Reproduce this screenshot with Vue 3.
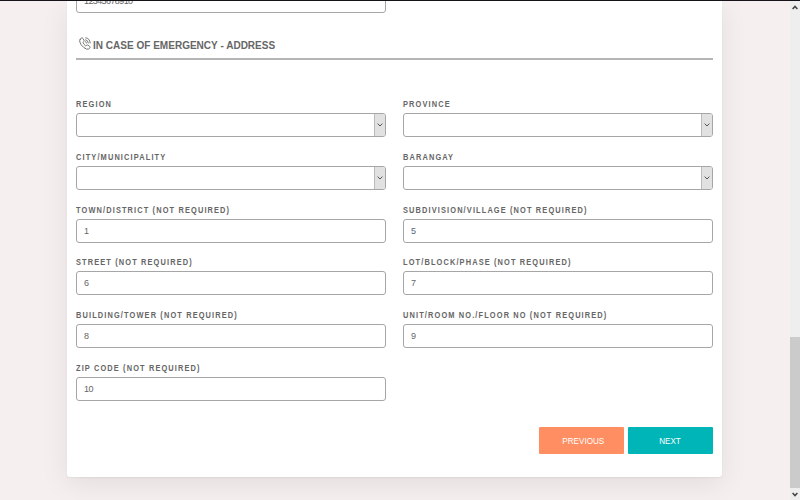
<script setup>
import { ref } from 'vue'

const fields = ref([
  { label: 'REGION', type: 'select', value: '' },
  { label: 'PROVINCE', type: 'select', value: '' },
  { label: 'CITY/MUNICIPALITY', type: 'select', value: '' },
  { label: 'BARANGAY', type: 'select', value: '' },
  { label: 'TOWN/DISTRICT (NOT REQUIRED)', type: 'text', value: '1' },
  { label: 'SUBDIVISION/VILLAGE (NOT REQUIRED)', type: 'text', value: '5', tint: true },
  { label: 'STREET (NOT REQUIRED)', type: 'text', value: '6' },
  { label: 'LOT/BLOCK/PHASE (NOT REQUIRED)', type: 'text', value: '7' },
  { label: 'BUILDING/TOWER (NOT REQUIRED)', type: 'text', value: '8' },
  { label: 'UNIT/ROOM NO./FLOOR NO (NOT REQUIRED)', type: 'text', value: '9' },
  { label: 'ZIP CODE (NOT REQUIRED)', type: 'text', value: '10' },
])
const phone = ref('12345678910')
</script>

<template>
  <div class="window">
    <main class="page">
      <form class="card" @submit.prevent>
        <input v-model="phone" class="control phone" />
        <h2 class="heading">
          <svg class="icon" viewBox="0 0 24 26" fill="none" stroke="currentColor" stroke-width="1.8" stroke-linejoin="round" stroke-linecap="round">
            <path d="M2.5 4.5 5 2Q6.5 1 7.8 2.8L10 6.5Q10.7 8 9.5 9.2L8 11Q9.5 15 13.5 18L15.3 16.5Q16.7 15.4 18.2 16.5L21.6 19Q23 20.5 21.8 21.8L19.5 24Q16 26 9.5 21 3.5 16 1.6 10 .8 6.5 2.5 4.5Z" />
            <path d="M13.5 1.5Q21.5 2.5 22.5 12M13.3 5.5Q18 6.3 18.7 12M13 9.3Q14.8 9.8 15 12" />
          </svg>
          <span class="heading-text">IN CASE OF EMERGENCY - ADDRESS</span>
        </h2>
        <div class="grid">
          <label v-for="f in fields" :key="f.label" class="field">
            <span class="label">{{ f.label }}</span>
            <span v-if="f.type === 'select'" class="control select">
              <span class="arrow">
                <svg viewBox="0 0 6 4" fill="none" stroke="#555" stroke-width="1"><path d="M.6.6 3 3 5.4.6" /></svg>
              </span>
            </span>
            <input v-else v-model="f.value" class="control" :class="{ tint: f.tint }" />
          </label>
        </div>
        <div class="actions">
          <button class="btn previous" type="button"><span class="caption">PREVIOUS</span></button>
          <button class="btn next" type="button"><span class="caption">NEXT</span></button>
        </div>
      </form>
    </main>
    <aside class="scrollbar">
      <svg class="caret" viewBox="0 0 6 5" fill="none" stroke="#444" stroke-width="1.5"><path d="M.6 4 3 1.4 5.4 4" /></svg>
      <div class="thumb"></div>
      <svg class="caret" viewBox="0 0 6 5" fill="none" stroke="#444" stroke-width="1.5"><path d="M.6 1 3 3.6 5.4 1" /></svg>
    </aside>
  </div>
</template>

<style>
body {
  margin: 0;
  overflow: hidden;
}
</style>

<style scoped>
.window {
  box-sizing: border-box;
  display: flex;
  width: 800px;
  height: 500px;
  overflow: hidden;
  border-top: 1px solid #151317;
  background: #f5efef;
  color: #666;
  font-family: "Liberation Sans", Arial, sans-serif;
}
.page {
  flex: 1;
  overflow: hidden;
  padding-left: 67px;
}
.card {
  box-sizing: border-box;
  display: flow-root;
  width: 655px;
  height: 475.5px;
  padding: 0 9px;
  background: #fff;
  border-radius: 0 0 3px 3px;
  box-shadow: 0 7px 28px rgba(0, 0, 0, 0.08), 0 1px 2px rgba(0, 0, 0, 0.05);
}
.control {
  box-sizing: border-box;
  display: block;
  width: 310px;
  height: 24px;
  padding: 0 7px;
  border: 1px solid #a6a6a6;
  border-radius: 3px;
  outline: none;
  background: #fff;
  color: #666;
  font: 9px "Liberation Sans", Arial, sans-serif;
  letter-spacing: -0.6px;
}
.phone {
  margin-top: -12px;
}
.tint {
  color: #55657a;
}
.heading {
  display: flex;
  align-items: center;
  gap: 2px;
  height: 26px;
  margin: 19px 0 0;
  padding: 0 0 0 3px;
  border-bottom: 2px solid #b5b5b5;
  font-size: 11.15px;
  line-height: 13px;
  white-space: nowrap;
}
.heading-text {
  transform: scaleX(0.9);
  transform-origin: left center;
}
.icon {
  width: 12px;
  height: 13px;
  margin-top: -4px;
}
.grid {
  display: grid;
  grid-template-columns: 310px 310px;
  grid-auto-rows: 52.8px;
  column-gap: 17px;
  margin-top: 39px;
}
.label {
  display: block;
  height: 14px;
  font-size: 8.2px;
  font-weight: bold;
  line-height: 11px;
  letter-spacing: 1.25px;
  white-space: nowrap;
  transform: scaleX(0.905);
  transform-origin: left center;
}
.select {
  display: flex;
  justify-content: flex-end;
  padding: 0;
  overflow: hidden;
}
.arrow {
  display: flex;
  align-items: center;
  justify-content: center;
  width: 10px;
  border-left: 1px solid #bbb;
  background: #e1e1e1;
}
.arrow svg {
  width: 6px;
  height: 4px;
}
.actions {
  display: flex;
  justify-content: flex-end;
  gap: 4px;
  margin-top: 11.5px;
}
.btn {
  width: 85px;
  height: 26.5px;
  padding: 0;
  border: 0;
  border-radius: 1px;
  color: #fff;
  font: 9px "Liberation Sans", Arial, sans-serif;
}
.caption {
  display: inline-block;
  transform: scaleX(0.9);
}
.previous {
  padding-left: 3px;
  background: #ff8e62;
}
.next {
  background: #00b5b8;
}
.scrollbar {
  box-sizing: border-box;
  display: flex;
  flex-direction: column;
  align-items: center;
  width: 10px;
  padding: 4px 0 3px;
  background: #eee;
}
.caret {
  width: 6px;
  height: 5px;
}
.thumb {
  width: 10px;
  height: 151px;
  margin: auto 0 4px;
  background: #cbcbcb;
}
</style>
